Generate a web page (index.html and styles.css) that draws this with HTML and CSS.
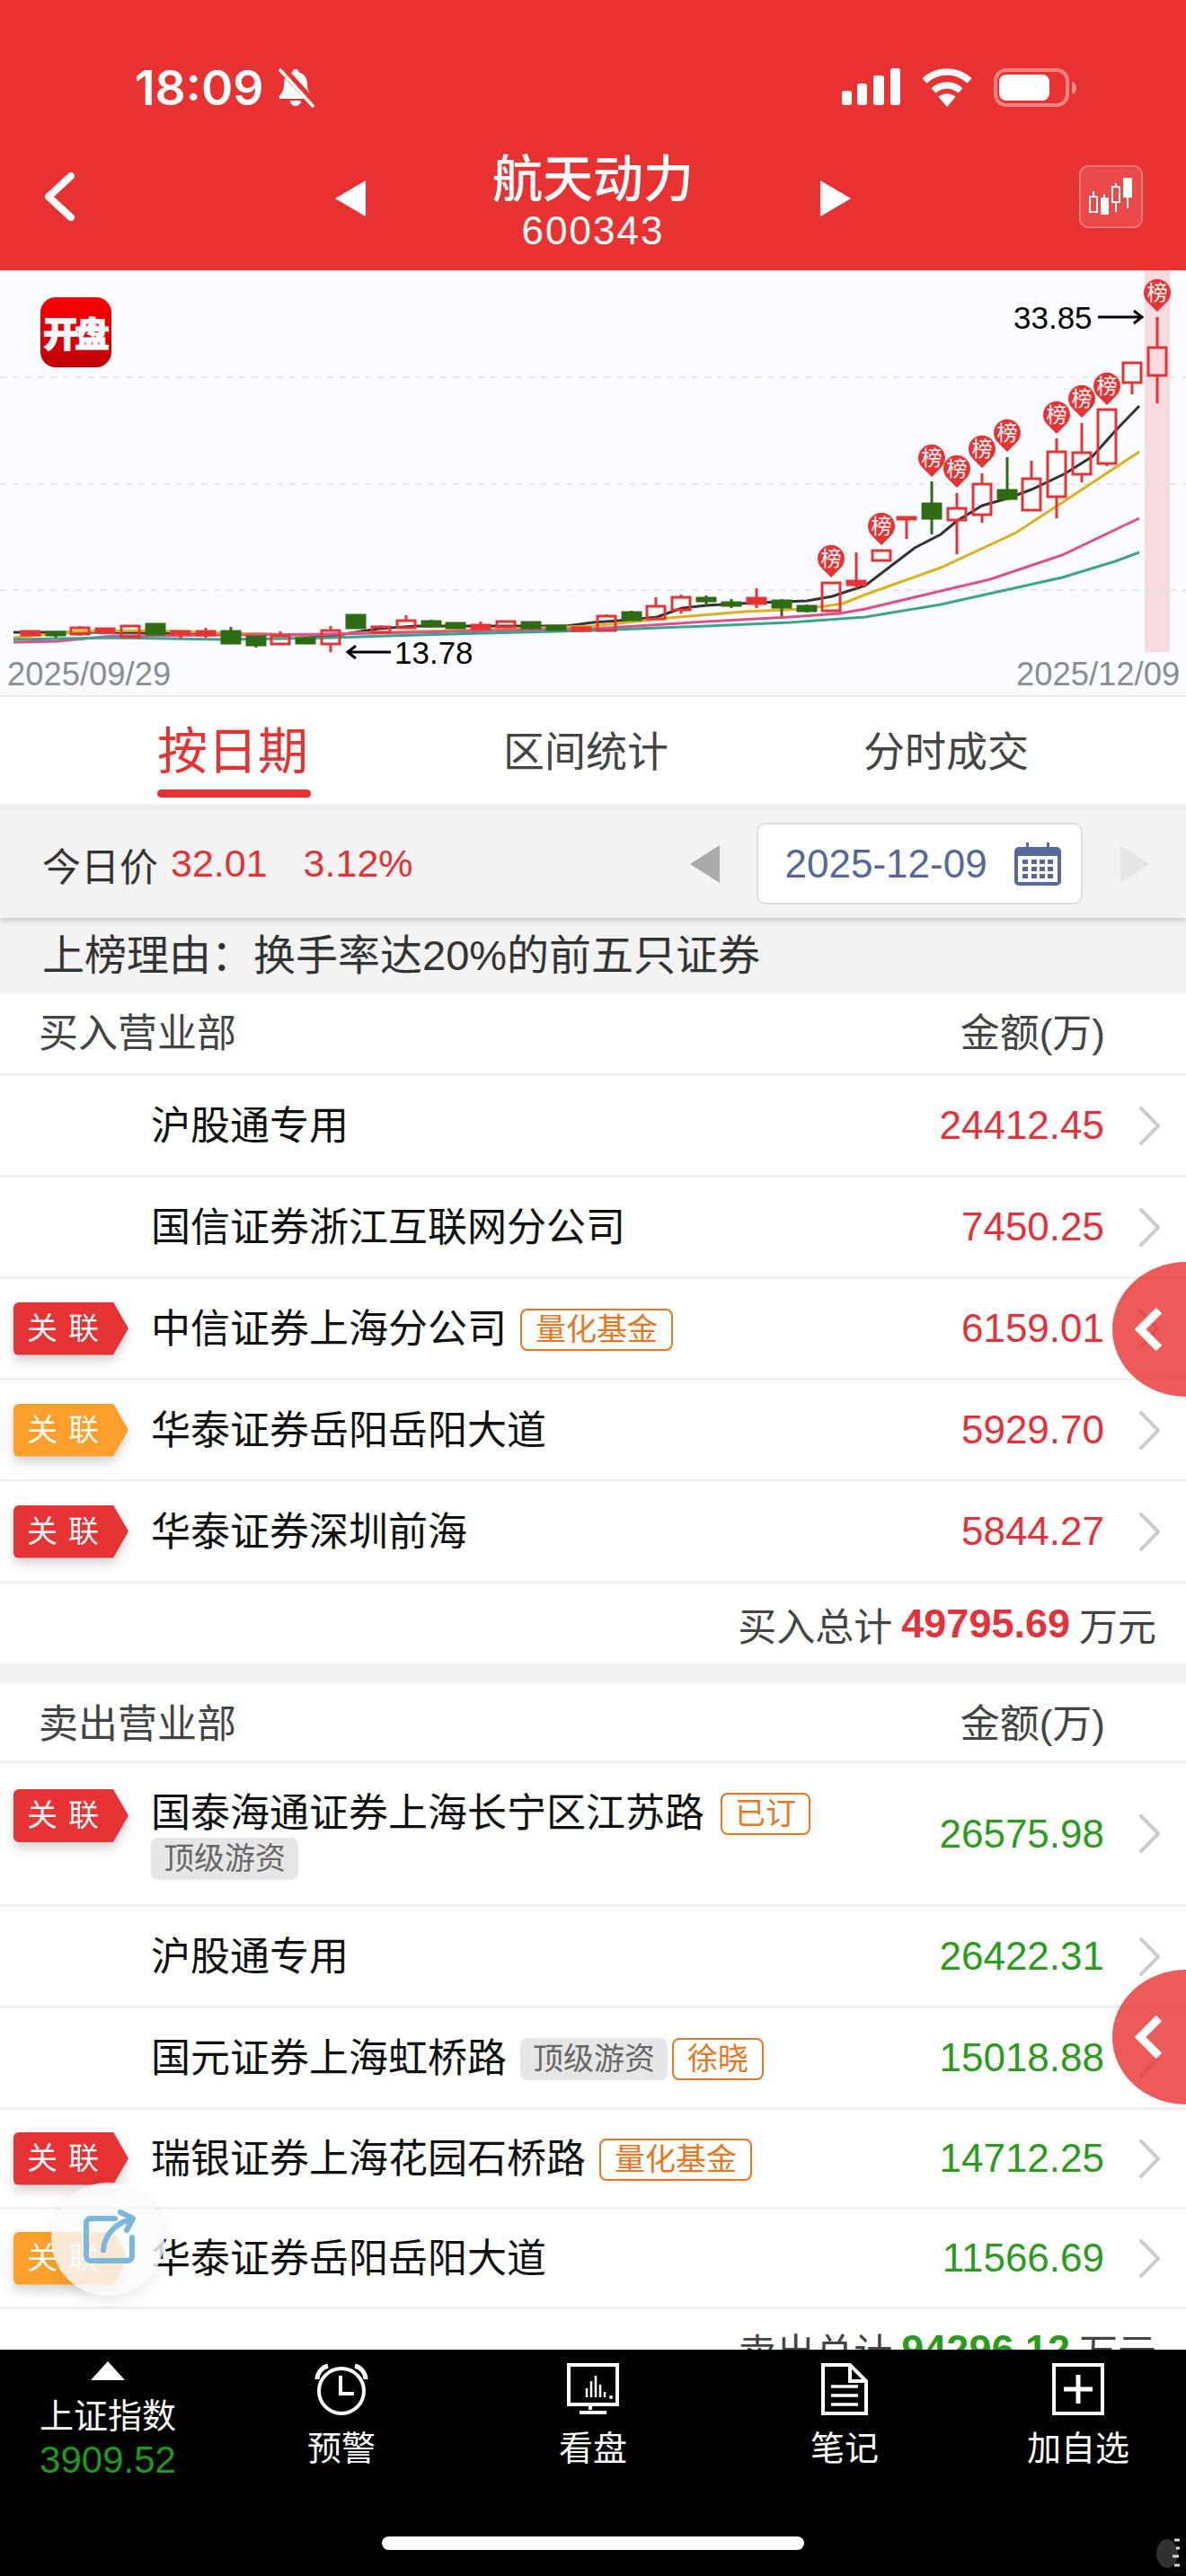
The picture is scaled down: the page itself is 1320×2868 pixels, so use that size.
FILE: index.html
```html
<!DOCTYPE html>
<html lang="zh-CN">
<head>
<meta charset="utf-8">
<title>航天动力 600343</title>
<link rel="stylesheet" href="styles.css">
</head>
<body>
<svg class="defs" width="0" height="0" aria-hidden="true">
  <symbol id="chev" viewBox="0 0 25 43"><path d="M3 2 L22 21.5 L3 41" fill="none" stroke="#cccccc" stroke-width="4" stroke-linecap="round" stroke-linejoin="round"/></symbol>
  <symbol id="side" viewBox="0 0 32 48"><path d="M28 3 L7 24 L28 45" fill="none" stroke="#ffffff" stroke-width="9" stroke-linejoin="miter"/></symbol>
  <g id="pin"><path d="M0 0 L-10 -10 A15 15 0 1 1 10 -10 Z" fill="#e63334"/><text class="pin-t" x="0" y="-13" text-anchor="middle">榜</text></g>
</svg>
<div class="page">
  <div class="scroll">
    <header class="head">
      <div class="status">
        <div class="status-left">
          <span class="time">18:09</span>
          <svg class="bell" width="44" height="46" viewBox="0 0 44 46"><path d="M22 2c2 0 3.500 1.500 3.500 3.500C32 7 35 12 35 19c0 6 2 9 5 13v3H4v-3c3-4 5-7 5-13C9 12 12 7 18.500 5.500 18.500 3.500 20 2 22 2zM16 37h12c0 3.500-2.500 6-6 6s-6-2.500-6-6z" fill="#fff"/><path d="M5 0 L44 42" stroke="#e83231" stroke-width="9"/><path d="M4 2 L42 44" stroke="#fff" stroke-width="3.500"/></svg>
        </div>
        <div class="status-right">
          <svg width="65" height="41" viewBox="0 0 65 41"><rect x="0" y="25" width="11" height="16" rx="3" fill="#fff"/><rect x="17" y="17" width="11" height="24" rx="3" fill="#fff"/><rect x="35" y="8" width="12" height="33" rx="3" fill="#fff"/><rect x="54" y="0" width="11" height="41" rx="3" fill="#fff"/></svg>
          <svg width="58" height="43" viewBox="0 0 58 43"><path d="M4 14 A36 36 0 0 1 54 14" fill="none" stroke="#fff" stroke-width="7.500"/><path d="M14 25 A22 22 0 0 1 44 25" fill="none" stroke="#fff" stroke-width="7.500"/><path d="M29 43 L19.500 32 A14 14 0 0 1 38.500 32 Z" fill="#fff"/></svg>
          <svg width="92" height="43" viewBox="0 0 92 43"><rect x="2" y="2" width="80" height="39" rx="12" fill="none" stroke="#fff" stroke-opacity=".4" stroke-width="4"/><rect x="6" y="7" width="56" height="29" rx="8" fill="#fff"/><path d="M87 15 a5 7 0 0 1 0 14 Z" fill="#fff" fill-opacity=".45"/></svg>
        </div>
      </div>
      <div class="nav">
        <svg class="back" width="36" height="54" viewBox="0 0 36 54"><path d="M31 4 L6 27 L31 50" fill="none" stroke="#fff" stroke-width="8" stroke-linecap="round" stroke-linejoin="round"/></svg>
        <div class="nav-mid">
          <i class="tri tri-l"></i>
          <div class="title">
            <div class="title-name">航天动力</div>
            <div class="title-code">600343</div>
          </div>
          <i class="tri tri-r"></i>
        </div>
        <div class="kbtn">
          <svg width="71" height="70" viewBox="0 0 71 70"><g fill="none" stroke="#fff" stroke-width="2"><path d="M16 29V35M41 20V24M41 41V52M54 36V48M28 32V36"/><rect x="12" y="35" width="8" height="17"/><rect x="37" y="24" width="8" height="17"/></g><rect x="24" y="36" width="9" height="19" fill="#fff"/><rect x="49" y="14" width="10" height="22" fill="#fff"/></svg>
        </div>
      </div>
    </header>

    <section class="chart">
      <svg class="kline" width="1320" height="475" viewBox="0 301 1320 475">
        <rect x="1274" y="301" width="28" height="425" fill="#f6dbe0"/>
        <g class="grid"><path d="M0 420H1320M0 539H1320M0 657H1320"/></g>
        <g class="ma">
          <path class="ma-k" d="M15 704L105 704 250 705 370 708 421 700 463 697 630 697 660 693 702 690 731 687 759 677 786 674 842 671 898 669 926 664 963 652 1018 610 1047 595 1065 580 1093 563 1121 555 1148 545 1186 527 1216 508 1241 480 1268 452"/>
          <path class="ma-y" d="M15 710L84 703 168 702 252 705 337 707 421 704 505 702 660 697 744 688 828 681 896 678 938 672 963 662 1047 632 1131 593 1186 557 1268 503"/>
          <path class="ma-p" d="M15 715L63 714 126 708 252 707 368 706 463 704 660 700 786 692 879 687 934 683 963 678 1047 658 1102 645 1182 618 1268 577"/>
          <path class="ma-t" d="M15 712L126 710 252 712 368 710 463 707 660 702 786 697 879 693 963 687 1047 673 1182 643 1241 625 1268 615"/>
        </g>
        <g class="cd-h">
          <path d="M89 697V699M89 706V708M79 699H99V706H79Z"/>
          <path d="M145 696V697M145 709V710M135 697H155V709H135Z"/>
          <path d="M312 703V708M302 708H322V717H302Z"/>
          <path d="M368 697V702M368 717V726M358 702H378V717H358Z"/>
          <path d="M424 696V698M414 698H434V704H414Z"/>
          <path d="M452 685V691M442 691H462V699H442Z"/>
          <path d="M563 691V692M553 692H573V698H553Z"/>
          <path d="M675 684V686M665 686H685V702H665Z"/>
          <path d="M730 665V675M720 675H740V689H720Z"/>
          <path d="M758 662V665M758 679V683M748 665H768V679H748Z"/>
          <path d="M915 649H935V680H915Z"/>
          <path d="M971 613H991V624H971Z"/>
          <path d="M1065 549V566M1065 579V617M1055 566H1075V579H1055Z"/>
          <path d="M1093 527V539M1093 573V582M1083 539H1103V573H1083Z"/>
          <path d="M1148 513V533M1138 533H1158V568H1138Z"/>
          <path d="M1176 488V503M1176 553V577M1166 503H1186V553H1166Z"/>
          <path d="M1204 471V504M1204 528V537M1194 504H1214V528H1194Z"/>
          <path d="M1232 516V519M1222 456H1242V516H1222Z"/>
          <path d="M1260 426V439M1250 404H1270V426H1250Z"/>
          <path d="M1288 353V387M1288 418V449M1278 387H1298V418H1278Z"/>
        </g>
        <g class="cd-r">
          <path d="M24 703H44V707H24Z"/>
          <path d="M107 700H127V704H107Z"/>
          <path d="M201 706V711M191 703H211V706H191Z"/>
          <path d="M229 699V710M219 703H239V707H219Z"/>
          <path d="M535 692V696M525 696H545V700H525Z"/>
          <path d="M637 699H657V702H637Z"/>
          <path d="M842 655V677M832 666H852V672H832Z"/>
          <path d="M953 615V655M943 647H963V651H943Z"/>
          <path d="M1009 578V600M999 576H1019V578H999Z"/>
        </g>
        <g class="cd-g">
          <path d="M62 703V710M52 704H72V707H52Z"/>
          <path d="M163 695H183V706H163Z"/>
          <path d="M257 698V703M247 703H267V716H247Z"/>
          <path d="M285 718V721M275 709H295V718H275Z"/>
          <path d="M340 709V711M330 711H350V716H330Z"/>
          <path d="M386 685H406V699H386Z"/>
          <path d="M480 690V692M470 692H490V697H470Z"/>
          <path d="M497 694H517V699H497Z"/>
          <path d="M591 699V701M581 693H601V699H581Z"/>
          <path d="M609 697H629V701H609Z"/>
          <path d="M703 680V682M693 682H713V690H693Z"/>
          <path d="M786 663V674M776 666H796V669H776Z"/>
          <path d="M814 667V677M804 671H824V674H804Z"/>
          <path d="M870 667V686M860 669H880V676H860Z"/>
          <path d="M898 673V682M888 675H908V680H888Z"/>
          <path d="M1037 536V595M1027 561H1047V577H1027Z"/>
          <path d="M1121 509V557M1111 546H1131V555H1111Z"/>
        </g>
        <use href="#pin" x="925" y="643"/>
        <use href="#pin" x="981" y="607"/>
        <use href="#pin" x="1037" y="531"/>
        <use href="#pin" x="1065" y="543"/>
        <use href="#pin" x="1093" y="521"/>
        <use href="#pin" x="1121" y="503"/>
        <use href="#pin" x="1176" y="483"/>
        <use href="#pin" x="1204" y="465"/>
        <use href="#pin" x="1232" y="451"/>
        <use href="#pin" x="1288" y="347"/>
        <text class="px" x="439" y="739">13.78</text>
        <path class="arrow" d="M435 726H388M396 719L387 726 396 733"/>
        <text class="px" x="1128" y="366">33.85</text>
        <path class="arrow" d="M1222 353H1270M1262 346L1271 353 1262 360"/>
        <text class="dt" x="8" y="763">2025/09/29</text>
        <text class="dt" x="1131" y="763">2025/12/09</text>
      </svg>
      <div class="logo">开盘</div>
    </section>

    <nav class="tabs">
      <div class="tab tab-on">按日期</div>
      <div class="tab">区间统计</div>
      <div class="tab">分时成交</div>
    </nav>

    <div class="bar">
      <span class="bar-l">今日价</span>
      <span class="bar-v">32.01</span>
      <span class="bar-p">3.12%</span>
      <i class="dtri dtri-l"></i>
      <div class="date">
        <span>2025-12-09</span>
        <svg width="52" height="48" viewBox="0 0 52 48"><path d="M5 5H13V0H16V5H36V0H39V5H47A5 5 0 0 1 52 10V43A5 5 0 0 1 47 48H5A5 5 0 0 1 0 43V10A5 5 0 0 1 5 5Z" fill="#55699c"/><rect x="4" y="15" width="44" height="29" fill="#fff"/><g fill="#55699c"><rect x="9" y="19" width="6" height="5"/><rect x="19" y="19" width="6" height="5"/><rect x="28" y="19" width="6" height="5"/><rect x="37" y="19" width="6" height="5"/><rect x="9" y="27" width="6" height="5"/><rect x="19" y="27" width="6" height="5"/><rect x="28" y="27" width="6" height="5"/><rect x="37" y="27" width="6" height="5"/><rect x="9" y="35" width="6" height="5"/><rect x="19" y="35" width="6" height="5"/><rect x="28" y="35" width="6" height="5"/><rect x="37" y="35" width="6" height="5"/></g></svg>
      </div>
      <i class="dtri dtri-r"></i>
    </div>

    <div class="reason">上榜理由：换手率达20%的前五只证券</div>

    <div class="sec-head"><span>买入营业部</span><span>金额(万)</span></div>
    <div class="row"><div class="slot"></div><div class="names"><span class="nm">沪股通专用</span></div><span class="amt up">24412.45</span><svg class="chev"><use href="#chev"/></svg></div>
    <div class="row"><div class="slot"></div><div class="names"><span class="nm">国信证券浙江互联网分公司</span></div><span class="amt up">7450.25</span><svg class="chev"><use href="#chev"/></svg></div>
    <div class="row"><div class="slot"><span class="bdg"><span class="bdg-in">关联</span></span></div><div class="names"><span class="nm">中信证券上海分公司</span><span class="tag">量化基金</span></div><span class="amt up">6159.01</span><svg class="chev"><use href="#chev"/></svg></div>
    <div class="row"><div class="slot"><span class="bdg"><span class="bdg-in bdg-o">关联</span></span></div><div class="names"><span class="nm">华泰证券岳阳岳阳大道</span></div><span class="amt up">5929.70</span><svg class="chev"><use href="#chev"/></svg></div>
    <div class="row"><div class="slot"><span class="bdg"><span class="bdg-in">关联</span></span></div><div class="names"><span class="nm">华泰证券深圳前海</span></div><span class="amt up">5844.27</span><svg class="chev"><use href="#chev"/></svg></div>
    <div class="sum">买入总计<b class="sum-n up">49795.69</b>万元</div>
    <div class="gap"></div>

    <div class="sec-head sec-head-b"><span>卖出营业部</span><span>金额(万)</span></div>
    <div class="row row-tall"><div class="slot"><span class="bdg"><span class="bdg-in">关联</span></span></div><div class="names"><span class="nm">国泰海通证券上海长宁区江苏路</span><span class="tag tag-s">已订</span><span class="tag tag-g tag-first">顶级游资</span></div><span class="amt dn">26575.98</span><svg class="chev"><use href="#chev"/></svg></div>
    <div class="row"><div class="slot"></div><div class="names"><span class="nm">沪股通专用</span></div><span class="amt dn">26422.31</span><svg class="chev"><use href="#chev"/></svg></div>
    <div class="row"><div class="slot"></div><div class="names"><span class="nm">国元证券上海虹桥路</span><span class="tag tag-g">顶级游资</span><span class="tag tag-n">徐晓</span></div><span class="amt dn">15018.88</span><svg class="chev"><use href="#chev"/></svg></div>
    <div class="row row-s"><div class="slot"><span class="bdg"><span class="bdg-in">关联</span></span></div><div class="names"><span class="nm">瑞银证券上海花园石桥路</span><span class="tag">量化基金</span></div><span class="amt dn">14712.25</span><svg class="chev"><use href="#chev"/></svg></div>
    <div class="row row-s"><div class="slot"><span class="bdg"><span class="bdg-in bdg-o">关联</span></span></div><div class="names"><span class="nm">华泰证券岳阳岳阳大道</span></div><span class="amt dn">11566.69</span><svg class="chev"><use href="#chev"/></svg></div>
    <div class="sum">卖出总计<b class="sum-n dn">94296.12</b>万元</div>
  </div>

  <div class="side side-a"><svg width="32" height="48"><use href="#side"/></svg></div>
  <div class="side side-b"><svg width="32" height="48"><use href="#side"/></svg></div>
  <div class="share">
    <svg width="64" height="66" viewBox="0 0 64 66"><g fill="none" stroke="#7ab7db" stroke-width="6" stroke-linecap="round" stroke-linejoin="round"><path d="M40 10H13a5 5 0 0 0-5 5V52a5 5 0 0 0 5 5H54a5 5 0 0 0 5-5V31"/><path d="M27 45C28 29 40 15 58 11"/><path d="M46 3L60 10 53 23"/></g></svg>
  </div>

  <footer class="foot">
    <div class="foot-grid">
      <div class="fi fi-idx">
        <i class="up-tri"></i>
        <div class="fi-name">上证指数</div>
        <div class="fi-val">3909.52</div>
      </div>
      <div class="fi">
        <svg width="60" height="58" viewBox="0 0 60 58"><circle cx="30" cy="31" r="25" fill="none" stroke="#fff" stroke-width="4"/><path d="M29 14V34H44" fill="none" stroke="#fff" stroke-width="4"/><path d="M3 18A16 16 0 0 1 15 3M57 18A16 16 0 0 0 45 3" fill="none" stroke="#fff" stroke-width="5"/></svg>
        <div class="fi-t">预警</div>
      </div>
      <div class="fi">
        <svg width="58" height="58" viewBox="0 0 58 58"><rect x="2" y="2" width="54" height="44" fill="none" stroke="#fff" stroke-width="4"/><path d="M22 38V28M27 38V20M32 38V14M37 38V24M42 38V32" stroke="#fff" stroke-width="2.500"/><circle cx="49" cy="38" r="2" fill="#fff"/><path d="M26 46V52M14 55H44" stroke="#fff" stroke-width="4"/></svg>
        <div class="fi-t">看盘</div>
      </div>
      <div class="fi">
        <svg width="52" height="58" viewBox="0 0 52 58"><path d="M2 2H32L50 20V56H2Z M32 2V20H50" fill="none" stroke="#fff" stroke-width="4"/><path d="M11 26H41M11 36H41M11 46H41" stroke="#fff" stroke-width="3.500"/></svg>
        <div class="fi-t">笔记</div>
      </div>
      <div class="fi">
        <svg width="58" height="58" viewBox="0 0 58 58"><rect x="2" y="2" width="54" height="54" fill="none" stroke="#fff" stroke-width="4"/><path d="M29 13V45M13 29H45" stroke="#fff" stroke-width="5"/></svg>
        <div class="fi-t">加自选</div>
      </div>
    </div>
    <div class="home"></div>
    <svg class="glint" width="30" height="36" viewBox="0 0 30 36"><ellipse cx="14" cy="18" rx="12" ry="16" fill="#3a3a3a"/><path d="M22 3H28M24 12H28M20 21H27M22 31H28" stroke="#fff" stroke-width="3"/></svg>
  </footer>
</div>
</body>
</html>
```
FILE: styles.css
```css
* { box-sizing: border-box; }
html, body { margin: 0; padding: 0; background: #fff; }
body { font-family: "Liberation Sans", "Noto Sans CJK SC", sans-serif; color: #222; }
.defs { position: absolute; }
.page { position: relative; width: 1320px; height: 2868px; overflow: hidden; }
.scroll { height: 2616px; overflow: hidden; }

.head { background: #e83231; height: 301px; color: #fff; }
.status { display: flex; justify-content: space-between; padding: 76px 122px 0 150px; height: 166px; }
.status-left { display: flex; align-items: center; gap: 14px; height: 44px; }
.time { font-family: Inter, "Liberation Sans", sans-serif; font-weight: 600; font-size: 53.500px; line-height: 44px; }
.status-right { display: flex; align-items: flex-start; gap: 23px; }
.nav { display: grid; grid-template-columns: 1fr auto 1fr; align-items: center; padding: 0 48px 0 48px; margin-top: -2px; }
.nav-mid { display: flex; align-items: center; width: 574px; justify-content: space-between; }
.tri { width: 0; height: 0; border-top: 20px solid transparent; border-bottom: 20px solid transparent; margin-top: -4px; }
.tri-l { border-right: 34px solid #fff; }
.tri-r { border-left: 34px solid #fff; }
.title { text-align: center; padding-top: 3px; }
.title-name { font-size: 56px; line-height: 66px; font-weight: 500; }
.title-code { font-size: 44px; line-height: 48px; letter-spacing: 2px; }
.back { justify-self: start; margin-top: -8px; }
.kbtn { justify-self: end; width: 71px; height: 70px; border-radius: 11px; background: rgba(255,255,255,.12); overflow: hidden; margin-top: -8px; box-shadow: inset 0 0 0 1.500px rgba(255,255,255,.35); }
.kbtn svg { display: block; }

.chart { position: relative; height: 475px; background: #fbfcff; border-bottom: 2px solid #ebebeb; }
.kline { display: block; }
.grid path { stroke: #dedede; stroke-width: 1.500; stroke-dasharray: 7 7; fill: none; }
.ma path { fill: none; stroke-width: 3; }
.ma-k { stroke: #333333; }
.ma-y { stroke: #dcb01e; }
.ma-p { stroke: #d9518f; }
.ma-t { stroke: #3ba38e; }
.cd-h path { fill: none; stroke: #e63334; stroke-width: 3; }
.cd-r path { fill: #e63334; stroke: #e63334; stroke-width: 3; }
.cd-g path { fill: #2e6b12; stroke: #2e6b12; stroke-width: 3; }
.pin-t { fill: #fff; font-size: 23px; font-family: "Noto Sans CJK SC", sans-serif; }
.px { font-size: 35px; fill: #000; font-family: "Liberation Sans", sans-serif; }
.dt { font-size: 36.400px; fill: #8a8d92; font-family: "Liberation Sans", sans-serif; }
.arrow { fill: none; stroke: #000; stroke-width: 3; }
.logo { position: absolute; left: 45px; top: 30px; width: 79px; height: 78px; border-radius: 17px; background: linear-gradient(#fb0000, #bf0208); color: #fff; font-weight: 900; font-size: 39px; line-height: 76px; text-align: center; font-family: "Noto Sans CJK SC", sans-serif; letter-spacing: -4px; text-indent: -3px; white-space: nowrap; -webkit-text-stroke: 1px #fff; }

.tabs { display: flex; gap: 217px; padding-left: 175px; height: 120px; background: #fff; position: relative; }
.tab { font-size: 46px; line-height: 122px; color: #444; }
.tab-on { position: relative; font-size: 56px; color: #e53333; line-height: 122px; }
.tab-on::after { content: ""; position: absolute; left: 0; right: -3px; top: 103px; height: 9px; border-radius: 5px; background: #e83231; }

.bar { height: 126px; background: #f3f3f3; display: flex; align-items: center; padding-left: 47px; border-top: 5px solid #eeeeee; font-size: 43px; box-shadow: 0 3px 6px rgba(0,0,0,.18); position: relative; }
.bar-l { color: #333; }
.bar-v { color: #e23234; margin-left: 14px; }
.bar-p { color: #e23234; margin-left: 40px; }
.dtri { width: 0; height: 0; border-top: 21px solid transparent; border-bottom: 21px solid transparent; }
.dtri-l { border-right: 33px solid #aaaaaa; margin-left: 308px; }
.dtri-r { border-left: 32px solid #e6e6e6; margin-left: 42px; }
.date { width: 363px; height: 91px; margin-left: 41px; background: #fff; border: 2px solid #dedede; border-radius: 10px; display: flex; align-items: center; justify-content: space-between; padding: 0 22px 0 30px; color: #56689a; font-size: 44px; }

.reason { height: 85px; background: #f3f3f3; padding-left: 47px; font-size: 47px; line-height: 84px; color: #333; white-space: nowrap; }

.sec-head { height: 91px; display: flex; justify-content: space-between; align-items: center; padding: 0 90px 8px 43px; font-size: 44px; color: #444; border-bottom: 3px solid #f1f1f1; }
.sec-head-b { height: 88px; padding-bottom: 4px; }
.row { display: flex; align-items: center; height: 113px; padding: 0 28px 0 15px; border-bottom: 3px solid #f1f1f1; }
.row-s { height: 111px; }
.row-tall { height: 160px; }
.row-tall .slot { align-self: flex-start; padding-top: 29px; }
.slot { width: 153px; flex: none; }
.bdg { display: block; width: 128px; height: 59px; filter: drop-shadow(0 7px 6px rgba(0,0,0,.16)); }
.bdg-in { display: block; height: 59px; background: #e63334; color: #fff; font-size: 34px; line-height: 59px; letter-spacing: 12px; padding-left: 15px; white-space: nowrap; border-radius: 6px 0 0 6px; clip-path: polygon(0 0, 111px 0, 100% 50%, 111px 100%, 0 100%); }
.bdg-o { background: #fda02b; }
.names { flex: 1; min-width: 0; display: flex; flex-wrap: wrap; align-items: center; padding-top: 2px; }
.nm { font-size: 44px; line-height: 54px; color: #111; white-space: nowrap; }
.tag { height: 47px; border: 2.500px solid #e8761e; border-radius: 8px; color: #e8761e; font-size: 34px; line-height: 42px; padding: 0 15px; margin-left: 15px; white-space: nowrap; background: #fff; }
.tag-s { padding: 0 14px; margin-left: 18px; }
.tag-g { border: 0; background: #e6e6e6; color: #666; line-height: 47px; padding: 0 14px; margin-left: 15px; }
.tag-first { margin-left: 0; }
.tag-n { margin-left: 5px; padding: 0 15px; }
.amt { font-size: 44px; margin-left: auto; white-space: nowrap; }
.up { color: #e2323a; }
.dn { color: #2b9a1f; }
.chev { width: 25px; height: 43px; margin-left: 38px; flex: none; }

.sum { height: 89px; display: flex; align-items: center; justify-content: flex-end; padding-right: 33px; font-size: 43px; color: #444; white-space: nowrap; }
.sum-n { font-size: 45px; font-weight: 700; margin: 0 10px; }
.gap { height: 23px; background: #f3f3f3; }

.side { position: absolute; left: 1238px; width: 82px; height: 150px; background: rgba(231,49,49,.8); border-radius: 82px 0 0 82px / 75px 0 0 75px; display: flex; align-items: center; justify-content: flex-start; padding-left: 24px; }
.side-a { top: 1405px; }
.side-b { top: 2193px; }
.share { position: absolute; left: 57px; top: 2430px; width: 126px; height: 126px; border-radius: 50%; background: rgba(249,250,251,.82); box-shadow: 0 6px 16px rgba(0,0,0,.08); display: flex; align-items: center; justify-content: center; }

.foot { position: relative; height: 252px; background: #000; display: flex; flex-direction: column; color: #fff; }
.foot-grid { display: grid; grid-template-columns: 240px 280px 280px 280px 240px; padding-top: 15px; }
.fi { display: flex; flex-direction: column; align-items: center; }
.fi-t { font-size: 38px; line-height: 48px; margin-top: 13px; }
.fi-idx { margin-top: -2px; }
.up-tri { width: 0; height: 0; border-left: 19px solid transparent; border-right: 19px solid transparent; border-bottom: 21px solid #fff; }
.fi-name { font-size: 38px; line-height: 48px; margin-top: 16px; }
.fi-val { font-size: 42px; line-height: 48px; color: #1c9b1c; margin-top: 1px; }
.home { width: 470px; height: 15px; border-radius: 8px; background: #fff; margin: auto auto 29px; }
.glint { position: absolute; left: 1285px; top: 209px; opacity: .85; }
```
